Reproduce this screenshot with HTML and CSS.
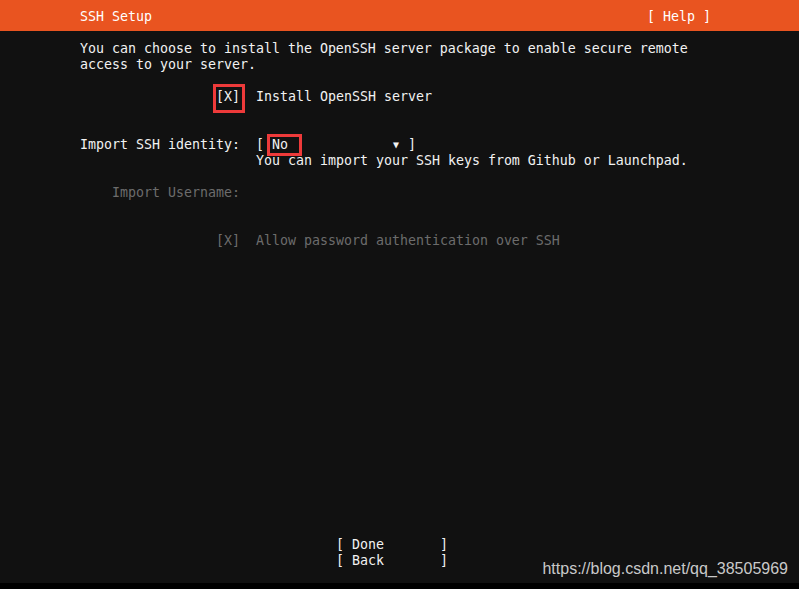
FILE: index.html
```html
<!doctype html>
<html>
<head>
  <meta charset="utf-8">
  <title>SSH Setup</title>
  <link rel="stylesheet" href="styles.css">
</head>
<body>
  <header class="titlebar">
    <span class="title">SSH Setup</span>
    <span class="help">[ Help ]</span>
  </header>

  <section class="screen">
    <p class="intro">You can choose to install the OpenSSH server package to enable secure remote
access to your server.</p>

    <div class="form">
      <div class="row row-install">
        <span class="label"><span class="mark mark-check">[X]</span></span>
        <span class="value">Install OpenSSH server</span>
      </div>

      <div class="row row-identity">
        <span class="label">Import SSH identity:</span>
        <span class="value">[ <span class="mark mark-select">No</span>             <span class="arrow">&#9660;</span> ]
You can import your SSH keys from Github or Launchpad.</span>
      </div>

      <div class="row row-username disabled">
        <span class="label">Import Username:</span>
        <span class="value"></span>
      </div>

      <div class="row row-password disabled">
        <span class="label">[X]</span>
        <span class="value">Allow password authentication over SSH</span>
      </div>
    </div>

    <div class="buttons">
      <div class="button">[ Done       ]</div>
      <div class="button">[ Back       ]</div>
    </div>
  </section>

  <footer class="strip"></footer>

  <div class="watermark">https://blog.csdn.net/qq_38505969</div>
</body>
</html>
```

FILE: styles.css
```css
html, body {
  height: 100%;
  margin: 0;
  overflow: hidden;
}
body {
  display: flex;
  flex-direction: column;
  background: #111111;
  color: #f2f2f2;
  font-family: "DejaVu Sans Mono", monospace;
  font-size: 13.29px;
  line-height: 16px;
  position: relative;
}
.titlebar {
  flex: 0 0 auto;
  height: 31px;
  box-sizing: border-box;
  padding: 9px 88px 6px 80px;
  background: #e95420;
  color: #ffffff;
  display: flex;
  justify-content: space-between;
  white-space: pre;
}
.screen {
  flex: 1 1 auto;
  display: flex;
  flex-direction: column;
  padding: 10px 80px 14px 80px;
}
.intro {
  margin: 0;
  white-space: pre;
}
.form {
  display: flex;
  flex-direction: column;
}
.row {
  display: grid;
  grid-template-columns: 160px 1fr;
  column-gap: 16px;
  white-space: pre;
}
.label {
  text-align: right;
}
.row-install {
  margin-top: 16px;
}
.row-identity {
  margin-top: 32px;
}
.row-username {
  margin-top: 16px;
}
.row-password {
  margin-top: 32px;
}
.disabled {
  color: #6c6c6c;
}
.arrow {
  display: inline-block;
  width: 8px;
  font-size: 10px;
  text-align: center;
  vertical-align: top;
  line-height: 15px;
}
.mark {
  position: relative;
}
.mark::after {
  content: "";
  position: absolute;
  border: 3px solid #ee3a3a;
}
.mark-check::after {
  left: -3px;
  right: -5px;
  top: -5px;
  bottom: -9px;
}
.mark-select::after {
  left: -5px;
  right: -14px;
  top: -3px;
  bottom: -4px;
}
.buttons {
  margin-top: auto;
  padding-left: 256px;
  display: flex;
  flex-direction: column;
}
.button {
  white-space: pre;
}
.strip {
  flex: 0 0 6px;
  background: #000000;
}
.watermark {
  position: absolute;
  right: 11px;
  bottom: 11px;
  font-family: "Liberation Sans", Arial, sans-serif;
  font-size: 16px;
  line-height: 18px;
  color: #c9c9c9;
}
```
